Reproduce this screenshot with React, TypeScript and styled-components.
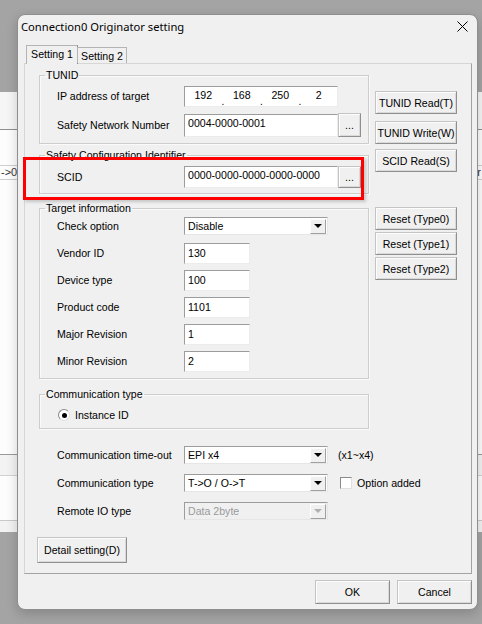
import React from 'react';
import styled, { createGlobalStyle } from 'styled-components';

const GlobalStyle = createGlobalStyle`
  html, body {
    margin: 0;
    padding: 0;
    background: #a4a4a4;
  }
  body {
    font-family: "Liberation Sans", Arial, sans-serif;
    font-size: 10.6px;
    color: #000;
  }
  * {
    box-sizing: border-box;
  }
`;

// ---- backdrop (the application window behind the modal) ----

const Screen = styled.div`
  position: relative;
  width: 482px;
  height: 624px;
  overflow: hidden;
  background: #a4a4a4;
  display: flex;
  flex-direction: column;
`;

const Shade = styled.div<{ $h: number }>`
  height: ${p => p.$h}px;
  flex: none;
`;

const AppWindow = styled.div`
  height: 440px;
  flex: none;
  display: flex;
  flex-direction: column;
  background: #fafafa;
`;

const AppToolbar = styled.div`
  height: 38px;
  background: #f6f6f6;
  border-bottom: 1px solid #8f8f8f;
`;

const AppGrid = styled.div`
  flex: 1;
  background: #fdfdfd;
  padding-top: 35px;
`;

const GridHeader = styled.div`
  height: 15px;
  display: flex;
  justify-content: space-between;
  border-top: 1px solid #cfcfcf;
  border-bottom: 1px solid #cfcfcf;
  font-size: 11px;
  line-height: 13px;
  color: #333;
  padding: 0 1px;
`;

const StatusRow = styled.div<{ $h: number; $bg: string; $line: string }>`
  height: ${p => p.$h}px;
  background: ${p => p.$bg};
  border-top: 1px solid ${p => p.$line};
`;

// ---- dialog ----

const Dialog = styled.div`
  position: absolute;
  left: 17px;
  top: 14px;
  width: 461px;
  height: 596px;
  background: #f0f0f0;
  border: 1px solid #8e8e8e;
  border-radius: 8px;
  box-shadow: 0 4px 12px rgba(0, 0, 0, 0.18);
  display: flex;
  flex-direction: column;
`;

const TitleBar = styled.div`
  height: 30px;
  flex: none;
  display: flex;
  align-items: center;
  justify-content: space-between;
  padding: 0 9px 8px 3px;
  font-family: "Noto Sans", "Open Sans", sans-serif;
  font-size: 11.2px;
  color: #000;
`;

const CloseIcon = styled.svg`
  width: 11px;
  height: 11px;
  display: block;
`;

const Body = styled.div`
  flex: 1;
  display: flex;
  flex-direction: column;
  padding: 0 5px 0 6px;
`;

const TabBar = styled.div`
  height: 19px;
  display: flex;
  align-items: flex-end;
  padding-left: 2px;
  margin-bottom: -1px;
  position: relative;
  z-index: 1;
`;

const Tab = styled.div<{ $active?: boolean }>`
  height: ${p => (p.$active ? 19 : 16)}px;
  width: ${p => (p.$active ? 52 : 50)}px;
  margin-bottom: ${p => (p.$active ? 0 : 1)}px;
  display: flex;
  align-items: center;
  justify-content: center;
  padding-bottom: ${p => (p.$active ? 2 : 0)}px;
  background: #f0f0f0;
  border: 1px solid #b4b4b4;
  border-bottom: none;
  border-right-color: ${p => (p.$active ? '#8a8a8a' : '#b4b4b4')};
  ${p => !p.$active && 'margin-left: -1px;'}
`;

const Panel = styled.div`
  height: 511px;
  flex: none;
  border: 1px solid;
  border-color: #d6d6d6 #a3a3a3 #a3a3a3 #d6d6d6;
  padding: 5px 0 0 14px;
  display: flex;
  flex-direction: column;
`;

const Section = styled.div<{ $mt: number; $btnTop: number }>`
  position: relative;
  display: grid;
  grid-template-columns: 330px 82px;
  column-gap: 6px;
  align-items: start;
  margin-top: ${p => p.$mt}px;

  & > div:last-child {
    padding-top: ${p => p.$btnTop}px;
  }
`;

const Group = styled.fieldset<{ $h: number; $pt: number }>`
  margin: 0;
  height: ${p => p.$h}px;
  padding: ${p => p.$pt}px 0 0 17px;
  border: 1px solid #cdcdcd;
  box-shadow: inset 1px 1px 0 #fafafa, 1px 1px 0 #fafafa;
  display: flex;
  flex-direction: column;
  gap: 6px;
  min-width: 0;
`;

const Legend = styled.legend`
  margin-left: -12px;
  padding: 0 1px;
  line-height: 12px;
`;

const ButtonStack = styled.div<{ $gap: number }>`
  display: flex;
  flex-direction: column;
  gap: ${p => p.$gap}px;
`;

const Button = styled.button<{ $w: number; $h: number }>`
  width: ${p => p.$w}px;
  height: ${p => p.$h}px;
  padding: 0;
  margin: 0;
  font-family: "Liberation Sans", Arial, sans-serif;
  font-size: 10.6px;
  color: #000;
  background: #f0f0f0;
  border: 1px solid;
  border-color: #c4c4c4 #8f8f8f #8f8f8f #c4c4c4;
  box-shadow: inset 1px 1px 0 #fdfdfd, inset -1px -1px 0 #d9d9d9;
  white-space: nowrap;
`;

const Row = styled.div<{ $mb?: number }>`
  display: flex;
  align-items: center;
  margin-bottom: ${p => p.$mb ?? 0}px;
`;

const Label = styled.span`
  width: 127px;
  flex: none;
  line-height: 13px;
`;

const TextBox = styled.div<{ $w: number; $h: number; $top?: boolean }>`
  width: ${p => p.$w}px;
  height: ${p => p.$h}px;
  flex: none;
  background: #fff;
  border: 1px solid;
  border-color: #9c9c9c #ececec #ececec #9c9c9c;
  padding: ${p => (p.$top ? '2px 0 0 3px' : '0 0 0 3px')};
  display: flex;
  align-items: ${p => (p.$top ? 'flex-start' : 'center')};
  line-height: 13px;
  white-space: nowrap;
`;

const IpBox = styled(TextBox)`
  padding: 0;
`;

const IpSegment = styled.span`
  flex: 1;
  text-align: center;
  align-self: flex-start;
  padding-top: 2px;
`;

const IpDot = styled.span`
  width: 2px;
  align-self: flex-end;
  line-height: 6px;
  font-size: 10px;
  margin-bottom: 1px;
`;

const Combo = styled.div<{ $disabled?: boolean }>`
  width: 144px;
  height: 18px;
  flex: none;
  display: flex;
  align-items: center;
  background: ${p => (p.$disabled ? '#f0f0f0' : '#fff')};
  color: ${p => (p.$disabled ? '#9a9a9a' : '#000')};
  border: 1px solid;
  border-color: #9c9c9c #e6e6e6 #e6e6e6 #9c9c9c;
  padding: 0 1px 0 3px;
`;

const ComboText = styled.span`
  flex: 1;
  line-height: 13px;
`;

const ComboArrow = styled.span<{ $disabled?: boolean }>`
  width: 16px;
  height: 15px;
  display: flex;
  align-items: center;
  justify-content: center;
  background: #f0f0f0;
  border: 1px solid;
  border-color: #fdfdfd #a0a0a0 #a0a0a0 #fdfdfd;

  &::after {
    content: '';
    border-left: 4px solid transparent;
    border-right: 4px solid transparent;
    border-top: 4px solid ${p => (p.$disabled ? '#b0b0b0' : '#000')};
  }
`;

const Radio = styled.span`
  width: 12px;
  height: 12px;
  margin: 0 5px 0 1px;
  border-radius: 50%;
  border: 1px solid;
  border-color: #8a8a8a #e0e0e0 #e0e0e0 #8a8a8a;
  background: #fff;
  display: flex;
  align-items: center;
  justify-content: center;

  &::after {
    content: '';
    width: 5px;
    height: 5px;
    border-radius: 50%;
    background: #000;
  }
`;

const Check = styled.span`
  width: 12px;
  height: 12px;
  margin: 0 5px 0 12px;
  flex: none;
  background: #fff;
  border: 1px solid;
  border-color: #8a8a8a #e0e0e0 #e0e0e0 #8a8a8a;
`;

const Hint = styled.span`
  margin-left: 10px;
  line-height: 13px;
`;

const BottomFields = styled.div`
  margin-top: 17px;
  padding-left: 18px;
  display: flex;
  flex-direction: column;
  gap: 10px;
`;

const DetailRow = styled.div`
  margin: 17px 0 0 -2px;
`;

const Highlight = styled.div`
  position: absolute;
  left: -16px;
  top: 8px;
  width: 341px;
  height: 43px;
  border: 3px solid #f00;
  box-shadow: 2px 2px 3px rgba(0, 0, 0, 0.18);
  pointer-events: none;
`;

const Footer = styled.div`
  display: flex;
  justify-content: flex-end;
  gap: 7px;
  padding-top: 6px;
`;

const targetFields = [
  { label: 'Vendor ID', value: '130' },
  { label: 'Device type', value: '100' },
  { label: 'Product code', value: '1101' },
  { label: 'Major Revision', value: '1' },
  { label: 'Minor Revision', value: '2' },
];

const ipParts = ['192', '168', '250', '2'];

export default function App() {
  return (
    <>
      <GlobalStyle />
      <Screen>
        <Shade $h={92} />
        <AppWindow>
          <AppToolbar />
          <AppGrid>
            <GridHeader>
              <span>-&gt;0</span>
              <span>r</span>
            </GridHeader>
          </AppGrid>
          <StatusRow $h={21} $bg="#f3f3f3" $line="#9a9a9a" />
          <StatusRow $h={45} $bg="#fdfdfd" $line="#d2d2d2" />
          <StatusRow $h={12} $bg="#f3f3f3" $line="#c9c9c9" />
        </AppWindow>

        <Dialog>
          <TitleBar>
            <span>Connection0 Originator setting</span>
            <CloseIcon viewBox="0 0 11 11">
              <path d="M0.5 0.5 L10.5 10.5 M10.5 0.5 L0.5 10.5" stroke="#000" strokeWidth="1" fill="none" />
            </CloseIcon>
          </TitleBar>

          <Body>
            <TabBar>
              <Tab $active>Setting 1</Tab>
              <Tab>Setting 2</Tab>
            </TabBar>

            <Panel>
              <Section $mt={0} $btnTop={22}>
                <Group $h={75} $pt={5}>
                  <Legend>TUNID</Legend>
                  <Row>
                    <Label>IP address of target</Label>
                    <IpBox $w={154} $h={21}>
                      {ipParts.map((p, i) => (
                        <React.Fragment key={i}>
                          {i > 0 && <IpDot>.</IpDot>}
                          <IpSegment>{p}</IpSegment>
                        </React.Fragment>
                      ))}
                    </IpBox>
                  </Row>
                  <Row>
                    <Label>Safety Network Number</Label>
                    <TextBox $w={154} $h={23} $top>0004-0000-0001</TextBox>
                    <Button $w={23} $h={24}>...</Button>
                  </Row>
                </Group>
                <ButtonStack $gap={7}>
                  <Button $w={82} $h={23}>TUNID Read(T)</Button>
                  <Button $w={82} $h={23}>TUNID Write(W)</Button>
                </ButtonStack>
              </Section>

              <Section $mt={5} $btnTop={17}>
                <Group $h={45} $pt={5}>
                  <Legend>Safety Configuration Identifier</Legend>
                  <Row>
                    <Label>SCID</Label>
                    <TextBox $w={154} $h={22} $top>0000-0000-0000-0000-0000</TextBox>
                    <Button $w={23} $h={22}>...</Button>
                  </Row>
                </Group>
                <ButtonStack $gap={0}>
                  <Button $w={82} $h={23}>SCID Read(S)</Button>
                </ButtonStack>
                <Highlight />
              </Section>

              <Section $mt={8} $btnTop={5}>
                <Group $h={177} $pt={3}>
                  <Legend>Target information</Legend>
                  <Row $mb={2}>
                    <Label>Check option</Label>
                    <Combo>
                      <ComboText>Disable</ComboText>
                      <ComboArrow />
                    </Combo>
                  </Row>
                  {targetFields.map(f => (
                    <Row key={f.label}>
                      <Label>{f.label}</Label>
                      <TextBox $w={66} $h={21}>{f.value}</TextBox>
                    </Row>
                  ))}
                </Group>
                <ButtonStack $gap={2}>
                  <Button $w={82} $h={23}>Reset (Type0)</Button>
                  <Button $w={82} $h={23}>Reset (Type1)</Button>
                  <Button $w={82} $h={23}>Reset (Type2)</Button>
                </ButtonStack>
              </Section>

              <Section $mt={9} $btnTop={0}>
                <Group $h={41} $pt={9}>
                  <Legend>Communication type</Legend>
                  <Row>
                    <Radio />
                    <span>Instance ID</span>
                  </Row>
                </Group>
                <div />
              </Section>

              <BottomFields>
                <Row>
                  <Label>Communication time-out</Label>
                  <Combo>
                    <ComboText>EPI x4</ComboText>
                    <ComboArrow />
                  </Combo>
                  <Hint>(x1~x4)</Hint>
                </Row>
                <Row>
                  <Label>Communication type</Label>
                  <Combo>
                    <ComboText>T-&gt;O / O-&gt;T</ComboText>
                    <ComboArrow />
                  </Combo>
                  <Check />
                  <span>Option added</span>
                </Row>
                <Row>
                  <Label>Remote IO type</Label>
                  <Combo $disabled>
                    <ComboText>Data 2byte</ComboText>
                    <ComboArrow $disabled />
                  </Combo>
                </Row>
              </BottomFields>

              <DetailRow>
                <Button $w={90} $h={26}>Detail setting(D)</Button>
              </DetailRow>
            </Panel>

            <Footer>
              <Button $w={75} $h={24}>OK</Button>
              <Button $w={75} $h={24}>Cancel</Button>
            </Footer>
          </Body>
        </Dialog>
      </Screen>
    </>
  );
}
